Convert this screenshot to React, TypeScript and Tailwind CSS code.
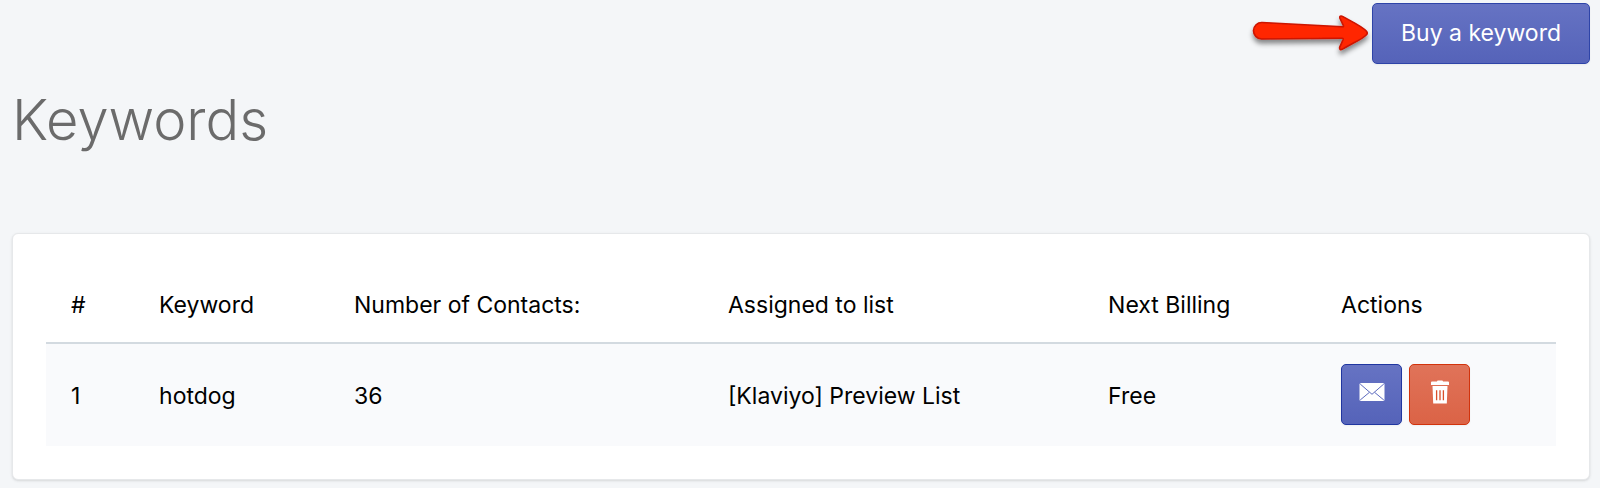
import React from "react";

interface KeywordRow {
  id: number;
  keyword: string;
  contacts: number;
  list: string;
  billing: string;
}

const columns = [
  { label: "#", width: "w-[5.83%]" },
  { label: "Keyword", width: "w-[12.91%]" },
  { label: "Number of Contacts:", width: "w-[24.77%]" },
  { label: "Assigned to list", width: "w-[25.17%]" },
  { label: "Next Billing", width: "w-[15.43%]" },
  { label: "Actions", width: "w-[15.89%]" },
];

const rows: KeywordRow[] = [
  { id: 1, keyword: "hotdog", contacts: 36, list: "[Klaviyo] Preview List", billing: "Free" },
];

function ArrowIcon() {
  return (
    <svg width="124" height="60" viewBox="0 0 124 60" className="overflow-visible" aria-hidden="true">
      <defs>
        <filter id="arrow-shadow" x="-10%" y="-20%" width="120%" height="160%">
          <feDropShadow dx="0" dy="4" stdDeviation="2.5" floodColor="#000" floodOpacity="0.45" />
        </filter>
      </defs>
      <path
        d="M14 19.5 L94.5 23.8 C95.5 23.8 95.8 23.2 95.3 22.3 L92 15.5 C91.2 13.2 92.6 12.2 95 13.6 C103 18.4 113 22.5 118.5 28.2 Q120 30 118.5 31.8 C113 37.5 103 40.5 95.5 45.7 C92.6 47.6 91 46.4 91.8 43.8 L95 36.8 C95.4 35.6 95 35.2 94 35.2 L13.5 36 A8.2 8.2 0 0 1 14 19.5 Z"
        fill="#ff2600"
        stroke="#cc1400"
        strokeWidth="1.6"
        strokeLinejoin="round"
        filter="url(#arrow-shadow)"
      />
    </svg>
  );
}

function MailIcon() {
  return (
    <svg width="26" height="18" viewBox="0 0 26 18" aria-hidden="true">
      <rect x="0.5" y="0" width="25" height="18" rx="1.5" fill="#fff" />
      <path d="M1.2 1 L10.6 9.2 L1.2 17 M24.8 1 L15.4 9.2 L24.8 17 M10.6 9.2 L13 11.3 L15.4 9.2" fill="none" stroke="#5c6abf" strokeWidth="1" />
    </svg>
  );
}

function TrashIcon() {
  return (
    <svg width="18" height="24" viewBox="0 0 18 24" aria-hidden="true">
      <path d="M6 1.5 Q6 0.5 7 0.5 H11 Q12 0.5 12 1.5 H17 Q18 1.5 18 2.5 V5 H0 V2.5 Q0 1.5 1 1.5 Z" fill="#fff" />
      <path d="M1.5 6 H16.5 L15.8 23.5 H2.2 Z" fill="#fff" />
      <path d="M5.6 10.3 V20.3 M9 10.3 V20.3 M12.4 10.3 V20.3" stroke="#d94f2b" strokeWidth="1.3" />
    </svg>
  );
}

export default function App() {
  return (
    <main className="min-h-screen bg-[#f4f6f8] pt-[3px] pr-2.5 pb-2 pl-3 font-[Inter,sans-serif] text-[23px] leading-8 text-black">
      <div className="flex justify-end">
        <ArrowIcon />
        <button
          type="button"
          className="h-[61px] rounded-[5px] border border-[#2e44a8] bg-linear-to-b from-[#6673c3] to-[#5563b9] px-7 pb-0.5 text-white shadow-xs"
        >
          Buy a keyword
        </button>
      </div>

      <h1 className="mt-4 text-[56px] leading-20 font-light text-[#6b6b6b]">Keywords</h1>

      <section className="mt-[73px] rounded-md border border-[#e6e8ea] bg-white p-[33px] shadow-sm">
        <table className="w-full table-fixed border-collapse text-left">
          <thead>
            <tr className="h-19 border-b-2 border-[#d3dae0]">
              {columns.map((col) => (
                <th key={col.label} className={`${col.width} px-[25px] font-normal whitespace-nowrap`}>
                  {col.label}
                </th>
              ))}
            </tr>
          </thead>
          <tbody>
            {rows.map((row) => (
              <tr key={row.id} className="h-[103px] bg-[#f9fafc]">
                <td className="px-[25px] pt-0.5">{row.id}</td>
                <td className="px-[25px] pt-0.5">{row.keyword}</td>
                <td className="px-[25px] pt-0.5">{row.contacts}</td>
                <td className="px-[25px] pt-0.5 whitespace-nowrap">{row.list}</td>
                <td className="px-[25px] pt-0.5">{row.billing}</td>
                <td className="px-[25px] pb-0.5">
                  <div className="flex gap-[7px]">
                    <button
                      type="button"
                      aria-label="Send message"
                      className="flex size-[61px] items-center justify-center rounded-[5px] border border-[#2036a0] bg-linear-to-b from-[#6673c3] to-[#5563b9] pb-1 shadow-xs"
                    >
                      <MailIcon />
                    </button>
                    <button
                      type="button"
                      aria-label="Delete keyword"
                      className="flex size-[61px] items-center justify-center rounded-[5px] border border-[#d2330c] bg-linear-to-b from-[#e07359] to-[#db6346] pb-1 shadow-xs"
                    >
                      <TrashIcon />
                    </button>
                  </div>
                </td>
              </tr>
            ))}
          </tbody>
        </table>
      </section>
    </main>
  );
}
